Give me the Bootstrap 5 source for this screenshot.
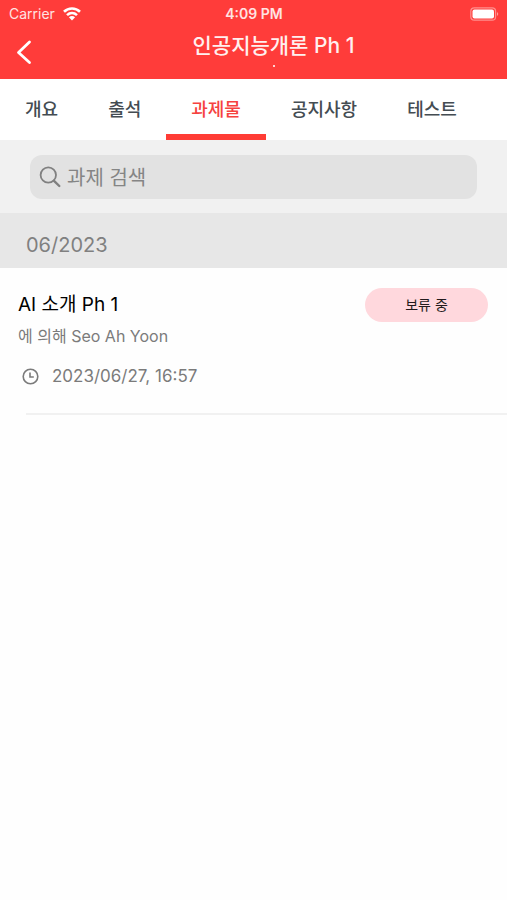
<!DOCTYPE html>
<html lang="ko">
<head>
<meta charset="utf-8">
<meta name="viewport" content="width=device-width, initial-scale=1">
<title>인공지능개론 Ph 1</title>
<link href="https://cdn.jsdelivr.net/npm/bootstrap@5.3.0/dist/css/bootstrap.min.css" rel="stylesheet">
<style>
  body { font-family: Inter, "Noto Sans CJK KR", sans-serif; background: #fefefe; color: #111; }
  .app-header { background: #ff3c3a; color: #fff; }
  .status-bar { height: 28px; font-size: 14px; line-height: 28px; color: #ffe3e2; padding: 0 8px 0 9px; }
  .status-side { flex: 1 1 0; }
  .title-bar { height: 51px; padding: 0 16px; }
  .title-side { width: 16px; }
  .back-btn { line-height: 1; color: #fff; margin-top: 12px; }
  .page-title { font-size: 21px; line-height: 36px; font-weight: 500; color: #fff0ef; }
  .page-dot { width: 2px; height: 2px; background: #ffd0cf; margin-top: 1px; }
  .tabs { background: #fff; overflow-x: auto; scrollbar-width: none; }
  .tabs .nav-link { padding: 1px 25px 0; font-size: 18px; line-height: 60px; font-weight: 500; color: #444c52; white-space: nowrap; border-radius: 0; }
  .tabs .nav-link.active { color: #f6423f; box-shadow: inset 0 -6px 0 #ff3c35; }
  .search-area { background: #f1f1f1; padding: 15px 30px 14px; }
  .search-box { background: #e2e2e2; border-radius: 12px; height: 44px; padding: 0 9px; gap: 6px; }
  .search-box input { font-size: 20px; line-height: 30px; color: #555; min-width: 0; padding: 2px 0 0; }
  .search-box input::placeholder { color: #858585; opacity: 1; }
  .month-head { background: #e7e7e7; color: #808080; font-size: 20px; line-height: 46px; padding: 9px 26px 0; }
  .task-item { padding: 20px 19px 22px 18px; }
  .task-name { font-size: 19px; line-height: 34px; font-weight: 400; color: #000; }
  .task-meta { font-size: 16px; line-height: 28px; color: #7b7b7b; }
  .task-date { font-size: 17px; gap: 13px; padding-left: 4px; margin-top: 12px; }
  .status-pill { width: 123px; background: #ffd8dd; color: #221b1c; font-size: 14px; line-height: 34px; }
  .item-rule { border-top: 2px solid #f1f1f1; margin: 1px 0 0 26px; }
</style>
</head>
<body>
<header class="app-header">
  <div class="status-bar d-flex align-items-center">
    <div class="status-side d-flex align-items-center gap-2">
      <span>Carrier</span>
      <svg width="18" height="14" viewBox="0 0 18 14" fill="none" stroke="#fff" stroke-width="2.6" aria-hidden="true"><path d="M1 4.800C5.500.4 12.500.4 17 4.800M4 8.100C7 5.300 11 5.300 14 8.100"/><path d="M9 13.500L5.900 10.300Q9 7.800 12.100 10.300Z" fill="#fff" stroke="none"/></svg>
    </div>
    <span class="fw-semibold">4:09 PM</span>
    <div class="status-side d-flex justify-content-end">
      <svg width="29" height="14" viewBox="0 0 29 14" aria-hidden="true"><rect x=".8" y=".8" width="24.800" height="12.400" rx="3.500" fill="none" stroke="#ff8f8d" stroke-width="1.200"/><rect x="2.500" y="2.500" width="21.500" height="9" rx="2" fill="#fff"/><path d="M27 5Q29.500 7 27 9Z" fill="#ff9b99"/></svg>
    </div>
  </div>
  <div class="title-bar d-flex">
    <div class="title-side">
      <button type="button" class="btn p-0 border-0 back-btn" aria-label="뒤로">
        <svg class="d-block" width="16" height="25" viewBox="0 0 16 25" fill="none" stroke="#fff" stroke-width="2.800" stroke-linecap="round" stroke-linejoin="round" aria-hidden="true"><path d="M13.500 2L2.500 12.500L13.500 22.500"/></svg>
      </button>
    </div>
    <div class="d-flex flex-column align-items-center flex-grow-1 ps-4">
      <h1 class="page-title mb-0">인공지능개론 Ph 1</h1>
      <div class="page-dot"></div>
    </div>
  </div>
</header>
<nav class="nav tabs flex-nowrap">
  <a class="nav-link" href="#">개요</a>
  <a class="nav-link" href="#">출석</a>
  <a class="nav-link active" aria-current="page" href="#">과제물</a>
  <a class="nav-link" href="#">공지사항</a>
  <a class="nav-link" href="#">테스트</a>
</nav>
<main>
  <div class="search-area">
    <label class="search-box d-flex align-items-center" for="task-search">
      <svg class="flex-shrink-0" width="22" height="22" viewBox="0 0 22 22" fill="none" stroke="#808080" stroke-width="1.800" stroke-linecap="round" aria-hidden="true"><circle cx="9.300" cy="9" r="7.700"/><path d="M15 14.800L20.300 20" stroke-width="2.400"/></svg>
      <input id="task-search" type="search" class="border-0 bg-transparent flex-grow-1" placeholder="과제 검색" aria-label="과제 검색">
    </label>
  </div>
  <h2 class="month-head mb-0 fw-normal">06/2023</h2>
  <article class="task-item">
    <div class="d-flex justify-content-between">
      <h3 class="task-name mb-0">AI 소개 Ph 1</h3>
      <span class="status-pill rounded-pill text-center">보류 중</span>
    </div>
    <div class="task-meta">에 의해 Seo Ah Yoon</div>
    <div class="task-meta task-date d-flex align-items-center">
      <svg width="17" height="17" viewBox="0 0 17 17" fill="none" stroke="#7b7b7b" stroke-width="1.600" aria-hidden="true"><circle cx="8.500" cy="8.500" r="7.300"/><path d="M8 4.500V9H11.800"/></svg>
      <time datetime="2023-06-27T16:57">2023/06/27, 16:57</time>
    </div>
  </article>
  <div class="item-rule"></div>
</main>
<script src="https://cdn.jsdelivr.net/npm/bootstrap@5.3.0/dist/js/bootstrap.bundle.min.js"></script>
</body>
</html>
